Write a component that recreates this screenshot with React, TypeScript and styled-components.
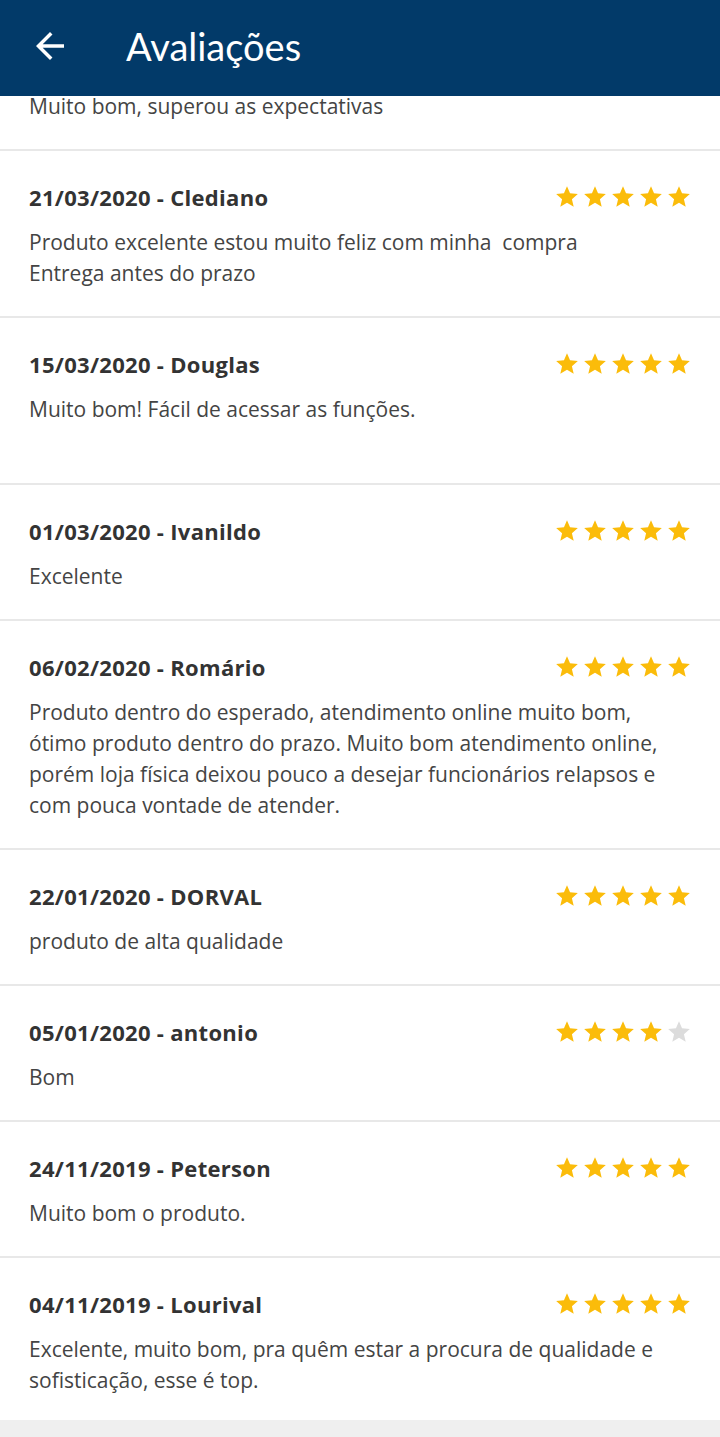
import React from 'react';
import styled, { createGlobalStyle } from 'styled-components';

interface Review {
  date: string;
  name: string;
  rating: number;
  text: string;
}

const reviews: Review[] = [
  { date: '21/03/2020', name: 'Clediano', rating: 5, text: 'Produto excelente estou muito feliz com minha  compra\nEntrega antes do prazo' },
  { date: '15/03/2020', name: 'Douglas', rating: 5, text: 'Muito bom! Fácil de acessar as funções.\n\u00a0' },
  { date: '01/03/2020', name: 'Ivanildo', rating: 5, text: 'Excelente' },
  { date: '06/02/2020', name: 'Romário', rating: 5, text: 'Produto dentro do esperado, atendimento online muito bom, ótimo produto dentro do prazo. Muito bom atendimento online, porém loja física deixou pouco a desejar funcionários relapsos e com pouca vontade de atender.' },
  { date: '22/01/2020', name: 'DORVAL', rating: 5, text: 'produto de alta qualidade' },
  { date: '05/01/2020', name: 'antonio', rating: 4, text: 'Bom' },
  { date: '24/11/2019', name: 'Peterson', rating: 5, text: 'Muito bom o produto.' },
  { date: '04/11/2019', name: 'Lourival', rating: 5, text: 'Excelente, muito bom, pra quêm estar a procura de qualidade e sofisticação, esse é top.' },
];

const GlobalStyle = createGlobalStyle`
  html, body {
    margin: 0;
    padding: 0;
    background: #efefef;
  }
  body {
    font-family: "Open Sans", "Noto Sans", sans-serif;
  }
`;

const Page = styled.div`
  width: 720px;
  height: 1437px;
  display: flex;
  flex-direction: column;
  overflow: hidden;
  background: #efefef;
`;

const Header = styled.header`
  position: relative;
  z-index: 2;
  height: 96px;
  flex-shrink: 0;
  display: flex;
  align-items: center;
  background: #023a69;
  color: #fff;
`;

const BackButton = styled.button`
  width: 100px;
  height: 96px;
  padding: 0 0 4px 29px;
  border: none;
  background: transparent;
  display: flex;
  align-items: center;
  color: #fff;
`;

const Title = styled.h1`
  margin: 0 0 4px 26px;
  font-family: Lato, "Noto Sans", sans-serif;
  font-weight: 400;
  font-size: 38px;
`;

const List = styled.div`
  display: flex;
  flex-direction: column;
  background: #fff;
`;

const Card = styled.div<{ $partial?: boolean }>`
  padding: ${(p) => (p.$partial ? '0' : '30px')} 28px 27px 29px;
  margin-top: ${(p) => (p.$partial ? '-5px' : '0')};
  border-bottom: 2px solid #e8e8e8;
  &:last-child {
    border-bottom: none;
    padding-bottom: 24px;
  }
`;

const CardHead = styled.div`
  display: flex;
  align-items: center;
  justify-content: space-between;
  height: 31px;
  margin-bottom: 15px;
`;

const Author = styled.span`
  font-size: 22px;
  font-weight: 700;
  letter-spacing: 0.3px;
  color: #333;
`;

const Stars = styled.div`
  display: flex;
  gap: 2px;
`;

const Body = styled.p`
  margin: 0;
  font-size: 21px;
  line-height: 31px;
  color: #444;
  white-space: pre-wrap;
`;

const Star = ({ on }: { on: boolean }) => (
  <svg width="26" height="26" viewBox="0 0 24 24">
    <path
      fill={on ? '#fbbc0a' : '#dcdcdc'}
      d="M12 17.27L18.18 21l-1.64-7.03L22 9.24l-7.19-.61L12 2 9.19 8.63 2 9.24l5.46 4.73L5.82 21z"
    />
  </svg>
);

const App: React.FC = () => {
  return (
    <Page>
      <GlobalStyle />
      <Header>
        <BackButton aria-label="Voltar">
          <svg width="42" height="42" viewBox="0 0 24 24">
            <path fill="#fff" d="M20 11H7.83l5.59-5.59L12 4l-8 8 8 8 1.41-1.41L7.83 13H20v-2z" />
          </svg>
        </BackButton>
        <Title>Avaliações</Title>
      </Header>
      <List>
        <Card $partial>
          <Body>Muito bom, superou as expectativas</Body>
        </Card>
        {reviews.map((r) => (
          <Card key={r.date + r.name}>
            <CardHead>
              <Author>{r.date} - {r.name}</Author>
              <Stars>
                {[1, 2, 3, 4, 5].map((i) => (
                  <Star key={i} on={i <= r.rating} />
                ))}
              </Stars>
            </CardHead>
            <Body>{r.text}</Body>
          </Card>
        ))}
      </List>
    </Page>
  );
};

export default App;
